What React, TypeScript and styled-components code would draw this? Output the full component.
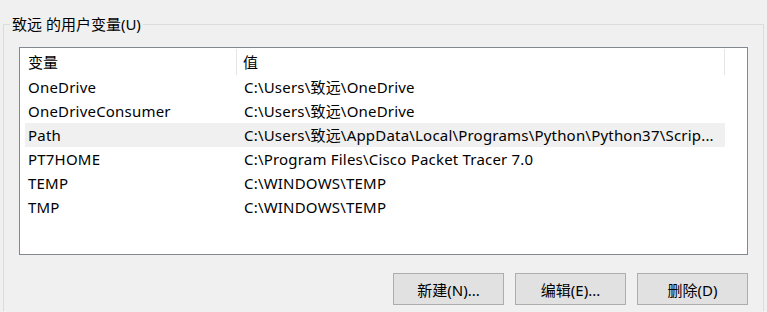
import React from 'react';
import styled, { createGlobalStyle } from 'styled-components';

const GlobalStyle = createGlobalStyle`
  html, body {
    margin: 0;
    padding: 0;
    background: #f0f0f0;
    overflow: hidden;
  }
  body {
    font-family: 'Noto Sans', 'Noto Sans CJK SC', sans-serif;
    font-size: 15px;
    color: #000;
  }
`;

const variables = [
  { name: 'OneDrive', value: 'C:\\Users\\致远\\OneDrive' },
  { name: 'OneDriveConsumer', value: 'C:\\Users\\致远\\OneDrive' },
  {
    name: 'Path',
    value: 'C:\\Users\\致远\\AppData\\Local\\Programs\\Python\\Python37\\Scrip...',
    hover: true
  },
  { name: 'PT7HOME', value: 'C:\\Program Files\\Cisco Packet Tracer 7.0' },
  { name: 'TEMP', value: 'C:\\WINDOWS\\TEMP' },
  { name: 'TMP', value: 'C:\\WINDOWS\\TEMP' }
];

const App = () => {
  return (
    <>
      <GlobalStyle />
      <GroupBox>
        <GroupTitle>致远 的用户变量(U)</GroupTitle>
        <ListView>
          <HeaderRow>
            <HeaderCell first>变量</HeaderCell>
            <HeaderCell>值</HeaderCell>
          </HeaderRow>
          {variables.map((v) => (
            <Row key={v.name} hover={v.hover}>
              <Cell first>{v.name}</Cell>
              <Cell>{v.value}</Cell>
            </Row>
          ))}
        </ListView>
        <ButtonBar>
          <Button>新建(N)...</Button>
          <Button>编辑(E)...</Button>
          <Button>删除(D)</Button>
        </ButtonBar>
      </GroupBox>
    </>
  );
};

export default App;

interface cellProps {
  first?: boolean;
}

interface rowProps {
  hover?: boolean;
}

const GroupBox = styled.fieldset`
  margin: 14px 3px 0 3px;
  padding: 13px 15px 6px 15px;
  border: 1px solid #dcdcdc;
  border-bottom: none;
  min-width: 0;
`;

const GroupTitle = styled.legend`
  margin-left: -9px;
  padding: 0 2px;
  line-height: 20px;
  height: 20px;
`;

const ListView = styled.div`
  height: 206px;
  border: 1px solid #828790;
  background: #fff;
  padding: 0 0 0 5px;
  display: flex;
  flex-direction: column;
  overflow: hidden;
`;

const HeaderRow = styled.div`
  display: grid;
  grid-template-columns: 212px 488px;
  height: 27px;
`;

const HeaderCell = styled.div<cellProps>`
  padding-left: ${(p) => (p.first ? '3px' : '6px')};
  margin-top: 1px;
  line-height: 26px;
  border-right: 1px solid #e5e5e5;
  white-space: nowrap;
`;

const Row = styled.div<rowProps>`
  display: grid;
  grid-template-columns: 212px 488px;
  width: 700px;
  height: 24px;
  line-height: 24px;
  background: ${(p) => (p.hover ? '#f0f0f0' : 'transparent')};
`;

const Cell = styled.div<cellProps>`
  padding-left: ${(p) => (p.first ? '3px' : '7px')};
  letter-spacing: 0.2px;
  white-space: nowrap;
  overflow: hidden;
`;

const ButtonBar = styled.div`
  display: flex;
  justify-content: flex-end;
  gap: 11px;
  margin-top: 18px;
`;

const Button = styled.button`
  width: 111px;
  height: 32px;
  padding: 0;
  background: #e1e1e1;
  border: 1px solid #adadad;
  border-radius: 0;
  font-family: 'Noto Sans', 'Noto Sans CJK SC', sans-serif;
  font-size: 15px;
  color: #000;
`;
